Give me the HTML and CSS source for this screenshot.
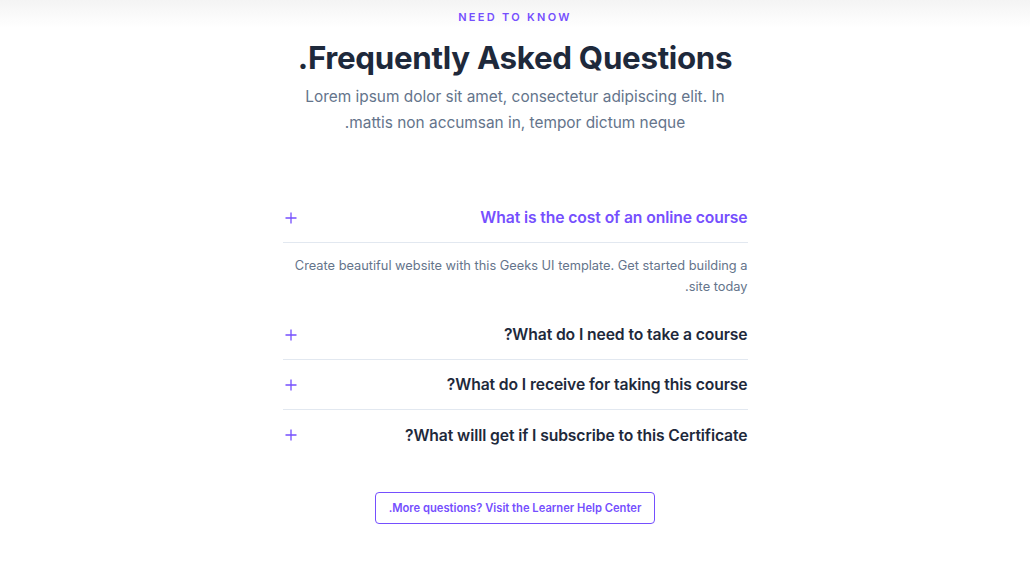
FILE: index.html
```html
<!DOCTYPE html>
<html lang="en" dir="rtl">
<head>
<meta charset="utf-8">
<title>FAQ</title>
<link rel="stylesheet" href="styles.css">
</head>
<body>
<section class="faq">
  <header class="faq-head">
    <span class="eyebrow">NEED TO KNOW</span>
    <h1 class="title">Frequently Asked Questions.</h1>
    <p class="lead">Lorem ipsum dolor sit amet, consectetur adipiscing elit. In mattis non accumsan in, tempor dictum neque.</p>
  </header>
  <div class="accordion">
    <div class="item open">
      <div class="item-head">
        <span class="q active">What is the cost of an online course</span>
        <svg class="plus" viewBox="0 0 12 12" width="12" height="12"><path d="M6 0.5v11M0.5 6h11" stroke="currentColor" stroke-width="1.3" fill="none"/></svg>
      </div>
      <div class="item-body">Create beautiful website with this Geeks UI template. Get started building a site today.</div>
    </div>
    <div class="item">
      <div class="item-head">
        <span class="q">What do I need to take a course?</span>
        <svg class="plus" viewBox="0 0 12 12" width="12" height="12"><path d="M6 0.5v11M0.5 6h11" stroke="currentColor" stroke-width="1.3" fill="none"/></svg>
      </div>
    </div>
    <div class="item">
      <div class="item-head">
        <span class="q">What do I receive for taking this course?</span>
        <svg class="plus" viewBox="0 0 12 12" width="12" height="12"><path d="M6 0.5v11M0.5 6h11" stroke="currentColor" stroke-width="1.3" fill="none"/></svg>
      </div>
    </div>
    <div class="item last">
      <div class="item-head">
        <span class="q">What willl get if I subscribe to this Certificate?</span>
        <svg class="plus" viewBox="0 0 12 12" width="12" height="12"><path d="M6 0.5v11M0.5 6h11" stroke="currentColor" stroke-width="1.3" fill="none"/></svg>
      </div>
    </div>
  </div>
  <div class="more">
    <a class="more-btn" href="#">More questions? Visit the Learner Help Center.</a>
  </div>
</section>
</body>
</html>
```
FILE: styles.css
```css
* { box-sizing: border-box; }
html, body { margin: 0; padding: 0; }
body {
  font-family: "Inter", "Liberation Sans", sans-serif;
  background: linear-gradient(#f4f4f4 0px, #ffffff 28px) no-repeat #fff;
  background-size: 100% 28px;
  color: #1e293b;
  min-height: 561px;
}
.faq {
  width: 465px;
  margin: 0 auto;
  padding-top: 10px;
}
.faq-head {
  display: flex;
  flex-direction: column;
  align-items: center;
  text-align: center;
}
.eyebrow {
  color: #754ffe;
  font-size: 11px;
  font-weight: 600;
  letter-spacing: 2.3px;
  line-height: 14px;
}
.title {
  margin: 15px 0 0;
  font-size: 31.3px;
  font-weight: 700;
  line-height: 38px;
  color: #1e293b;
  letter-spacing: -0.3px;
  white-space: nowrap;
}
.lead {
  margin: 7px 0 0;
  width: 430px;
  font-size: 15.4px;
  line-height: 26px;
  color: #64748b;
}
.accordion {
  margin-top: 57px;
}
.item-head {
  display: flex;
  align-items: center;
  justify-content: space-between;
  height: 50px;
  border-bottom: 1px solid #e2e8f0;
}
.item.last .item-head { border-bottom: none; }
.q {
  font-size: 15.7px;
  font-weight: 600;
  color: #1e293b;
  letter-spacing: -0.1px;
}
.q.active { color: #754ffe; }
.plus {
  color: #754ffe;
  margin-left: 2px;
}
.item-body {
  padding: 12px 0 13px;
  font-size: 12.8px;
  line-height: 21px;
  color: #64748b;
}
.more {
  display: flex;
  justify-content: center;
  margin-top: 32px;
}
.more-btn {
  display: inline-flex;
  align-items: center;
  justify-content: center;
  height: 32px;
  padding: 0 13px;
  border: 1px solid #754ffe;
  border-radius: 4px;
  color: #754ffe;
  font-size: 11.2px;
  font-weight: 600;
  text-decoration: none;
}
```
